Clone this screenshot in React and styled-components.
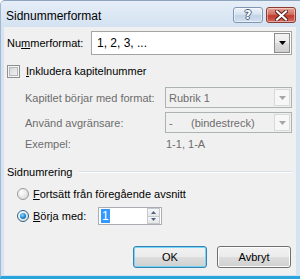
import React from "react"
import styled, { createGlobalStyle } from "styled-components"

const GlobalStyle = createGlobalStyle`
  html, body {
    margin: 0;
    padding: 0;
    background: #ffffff;
  }
  body {
    font-family: "Segoe UI", "Liberation Sans", Arial, sans-serif;
    font-size: 11px;
    color: #000;
  }
`

const Window = styled.div`
  width: 300px;
  height: 279px;
  box-sizing: border-box;
  display: flex;
  flex-direction: column;
  background: #d6e3f2;
  border-top: 1px solid #8ea4be;
  border-left: 1px solid #a3b7cd;
  border-bottom: 3px solid #2aa5db;
  border-top-left-radius: 5px;
  overflow: hidden;
`

const TitleBar = styled.div`
  height: 26px;
  flex: none;
  display: flex;
  align-items: flex-start;
  padding: 0 4px 0 5px;
  background: linear-gradient(#e6eef8, #d3e1f1);
`

const Title = styled.div`
  font-size: 12px;
  line-height: 16px;
  margin-top: 7px;
  color: #000;
`

const CaptionButtons = styled.div`
  margin-left: auto;
  margin-top: 6px;
  display: flex;
  gap: 3px;
`

const CaptionButton = styled.div`
  width: 30px;
  height: 16px;
  box-sizing: border-box;
  border-radius: 3px;
  display: flex;
  align-items: center;
  justify-content: center;
  border: 1px solid ${p => (p.$close ? "#8b3a33" : "#8396b0")};
  background: ${p =>
    p.$close
      ? "linear-gradient(#e4a395, #d0705f 45%, #c0392b 55%, #cf6a5b)"
      : "linear-gradient(#eef3fa, #d7e3f1 45%, #c2d3e8 55%, #d3e0ef)"};
  box-shadow: inset 0 0 0 1px rgba(255, 255, 255, 0.45);
`

const HelpGlyph = styled.span`
  font-family: "DejaVu Sans", sans-serif;
  font-weight: bold;
  font-size: 12px;
  line-height: 12px;
  color: #ffffff;
  text-shadow: 1px 0 0 #4d5f78, -1px 0 0 #4d5f78, 0 1px 0 #4d5f78, 0 -1px 0 #4d5f78;
`

const Client = styled.div`
  flex: 1;
  margin: 0 4px 1px 3px;
  background: #f0f0f0;
  display: flex;
  flex-direction: column;
`

const FormatRow = styled.div`
  margin-top: 4px;
  height: 24px;
  display: grid;
  grid-template-columns: 84px 1fr;
  align-items: center;
  padding: 0 4px 0 3px;
`

const Label = styled.span`
  color: ${p => (p.$disabled ? "#6d6d6d" : "#000")};
  white-space: nowrap;
`

const Combo = styled.div`
  height: ${p => p.$h}px;
  box-sizing: border-box;
  display: flex;
  align-items: stretch;
  border: 1px solid ${p => (p.$disabled ? "#adb2b5" : "#a5a5a5")};
  background: ${p => (p.$disabled ? "#f0f0f0" : "#ffffff")};
`

const ComboText = styled.div`
  flex: 1;
  display: flex;
  align-items: center;
  padding-left: ${p => (p.$big ? 5 : 3)}px;
  font-size: ${p => (p.$big ? 12 : 11)}px;
  color: ${p => (p.$disabled ? "#6d6d6d" : "#000")};
  white-space: pre;
`

const DropButton = styled.div`
  width: 16px;
  margin: 1px;
  box-sizing: border-box;
  display: flex;
  align-items: center;
  justify-content: center;
  border: 1px solid ${p => (p.$disabled ? "#d9d9d9" : "#8c8c8c")};
  background: ${p =>
    p.$disabled
      ? "#f7f7f7"
      : "linear-gradient(#f3f3f3, #ebebeb 50%, #dddddd 50%, #cfcfcf)"};
`

const CheckRow = styled.div`
  margin-top: 9px;
  height: 14px;
  display: flex;
  align-items: center;
  gap: 6px;
  padding-left: 3px;
`

const CheckBox = styled.div`
  width: 13px;
  height: 13px;
  box-sizing: border-box;
  border: 1px solid #8e8f8f;
  background: linear-gradient(135deg, #cdd1d6, #f7f7f7);
  box-shadow: inset 0 0 0 1px #f4f4f4, inset 0 0 0 2px #b5b9be;
`

const SubGrid = styled.div`
  display: grid;
  grid-template-columns: 140px 1fr;
  align-items: center;
  padding: 0 4px 0 21px;
  margin-top: ${p => p.$top}px;
  height: ${p => p.$h}px;
`

const ExampleValue = styled.span`
  color: #6d6d6d;
  padding-left: 1px;
`

const GroupHeader = styled.div`
  margin-top: 14px;
  height: 14px;
  display: flex;
  align-items: center;
  gap: 7px;
  padding: 0 4px 0 3px;
`

const GroupLine = styled.div`
  flex: 1;
  height: 0;
  border-top: 1px solid #d5dfe5;
  border-bottom: 1px solid #ffffff;
`

const RadioRow = styled.div`
  margin-top: ${p => p.$top}px;
  height: ${p => p.$h}px;
  display: flex;
  align-items: center;
  padding-left: 13px;
`

const Radio = styled.div`
  width: 12px;
  height: 12px;
  box-sizing: border-box;
  border-radius: 50%;
  margin-right: 4px;
  position: relative;
  border: 1px solid ${p => (p.$checked ? "#2c628b" : "#9a9a9a")};
  background: radial-gradient(circle at 35% 35%, #ffffff, #d2d2d2);
  &::after {
    content: "";
    display: ${p => (p.$checked ? "block" : "none")};
    position: absolute;
    left: 2px;
    top: 2px;
    width: 6px;
    height: 6px;
    border-radius: 50%;
    background: radial-gradient(circle at 40% 35%, #8fdcff, #1a85d2 55%, #0b4f96);
  }
`

const RadioLabel = styled.span`
  width: ${p => (p.$w ? `${p.$w}px` : "auto")};
  white-space: nowrap;
`

const SpinBox = styled.div`
  width: 64px;
  height: 18px;
  box-sizing: border-box;
  display: flex;
  border: 1px solid #abadb3;
  background: #ffffff;
`

const SpinText = styled.div`
  flex: 1;
  display: flex;
  align-items: center;
  padding-left: 2px;
  font-size: 12px;
`

const Selected = styled.span`
  background: #3399ff;
  color: #ffffff;
  padding: 0 1px;
  line-height: 14px;
`

const SpinButtons = styled.div`
  width: 13px;
  margin: 0 1px 0 0;
  display: flex;
  flex-direction: column;
`

const SpinButton = styled.div`
  flex: 1;
  display: flex;
  align-items: center;
  justify-content: center;
  border: 1px solid #c5c8cc;
  background: linear-gradient(#f7f7f7, #e6e6e6);
  & + & {
    border-top: none;
  }
`

const ButtonRow = styled.div`
  margin-top: 21px;
  display: flex;
  justify-content: flex-end;
  gap: 10px;
  padding-right: 5px;
`

const Button = styled.div`
  width: 74px;
  height: 22px;
  box-sizing: border-box;
  border-radius: 3px;
  display: flex;
  align-items: center;
  justify-content: center;
  border: 1px solid ${p => (p.$default ? "#3c7fb1" : "#707070")};
  background: linear-gradient(#f2f2f2, #ebebeb 50%, #dddddd 50%, #cfcfcf);
  box-shadow: ${p =>
    p.$default ? "inset 0 0 0 1px #6fd7f7" : "inset 0 0 0 1px #fcfcfc"};
`

const Arrow = ({ color }) => (
  <svg width="7" height="4" viewBox="0 0 7 4">
    <polygon points="0,0 7,0 3.5,4" fill={color} />
  </svg>
)

const SpinArrow = ({ up }) => (
  <svg width="5" height="3" viewBox="0 0 5 3">
    <polygon points={up ? "0,3 5,3 2.5,0" : "0,0 5,0 2.5,3"} fill="#4b628a" />
  </svg>
)

const CloseGlyph = () => (
  <svg width="13" height="11" viewBox="0 0 13 11">
    <path d="M2 1.5 L11 9.5 M11 1.5 L2 9.5" stroke="#5a2420" strokeWidth="4" strokeLinecap="square" />
    <path d="M2 1.5 L11 9.5 M11 1.5 L2 9.5" stroke="#ffffff" strokeWidth="2" strokeLinecap="square" />
  </svg>
)

export default function App() {
  return (
    <>
      <GlobalStyle />
      <Window>
        <TitleBar>
          <Title>Sidnummerformat</Title>
          <CaptionButtons>
            <CaptionButton>
              <HelpGlyph>?</HelpGlyph>
            </CaptionButton>
            <CaptionButton $close>
              <CloseGlyph />
            </CaptionButton>
          </CaptionButtons>
        </TitleBar>
        <Client>
          <FormatRow>
            <Label>Nu<u>m</u>merformat:</Label>
            <Combo $h={24}>
              <ComboText $big>1, 2, 3, ...</ComboText>
              <DropButton>
                <Arrow color="#000" />
              </DropButton>
            </Combo>
          </FormatRow>

          <CheckRow>
            <CheckBox />
            <Label><u>I</u>nkludera kapitelnummer</Label>
          </CheckRow>

          <SubGrid $top={9} $h={21}>
            <Label $disabled>Kapitlet börjar med format:</Label>
            <Combo $h={21} $disabled>
              <ComboText $disabled>Rubrik 1</ComboText>
              <DropButton $disabled>
                <Arrow color="#a6a6a6" />
              </DropButton>
            </Combo>
          </SubGrid>

          <SubGrid $top={4} $h={21}>
            <Label $disabled>Använd avgränsare:</Label>
            <Combo $h={21} $disabled>
              <ComboText $disabled>{"-      (bindestreck)"}</ComboText>
              <DropButton $disabled>
                <Arrow color="#a6a6a6" />
              </DropButton>
            </Combo>
          </SubGrid>

          <SubGrid $top={4} $h={14}>
            <Label $disabled>Exempel:</Label>
            <ExampleValue>1-1, 1-A</ExampleValue>
          </SubGrid>

          <GroupHeader>
            <Label>Sidnumrering</Label>
            <GroupLine />
          </GroupHeader>

          <RadioRow $top={8} $h={14}>
            <Radio />
            <RadioLabel><u>F</u>ortsätt från föregående avsnitt</RadioLabel>
          </RadioRow>

          <RadioRow $top={6} $h={18}>
            <Radio $checked />
            <RadioLabel $w={65}><u>B</u>örja med:</RadioLabel>
            <SpinBox>
              <SpinText>
                <Selected>1</Selected>
              </SpinText>
              <SpinButtons>
                <SpinButton>
                  <SpinArrow up />
                </SpinButton>
                <SpinButton>
                  <SpinArrow />
                </SpinButton>
              </SpinButtons>
            </SpinBox>
          </RadioRow>

          <ButtonRow>
            <Button $default>OK</Button>
            <Button>Avbryt</Button>
          </ButtonRow>
        </Client>
      </Window>
    </>
  )
}
